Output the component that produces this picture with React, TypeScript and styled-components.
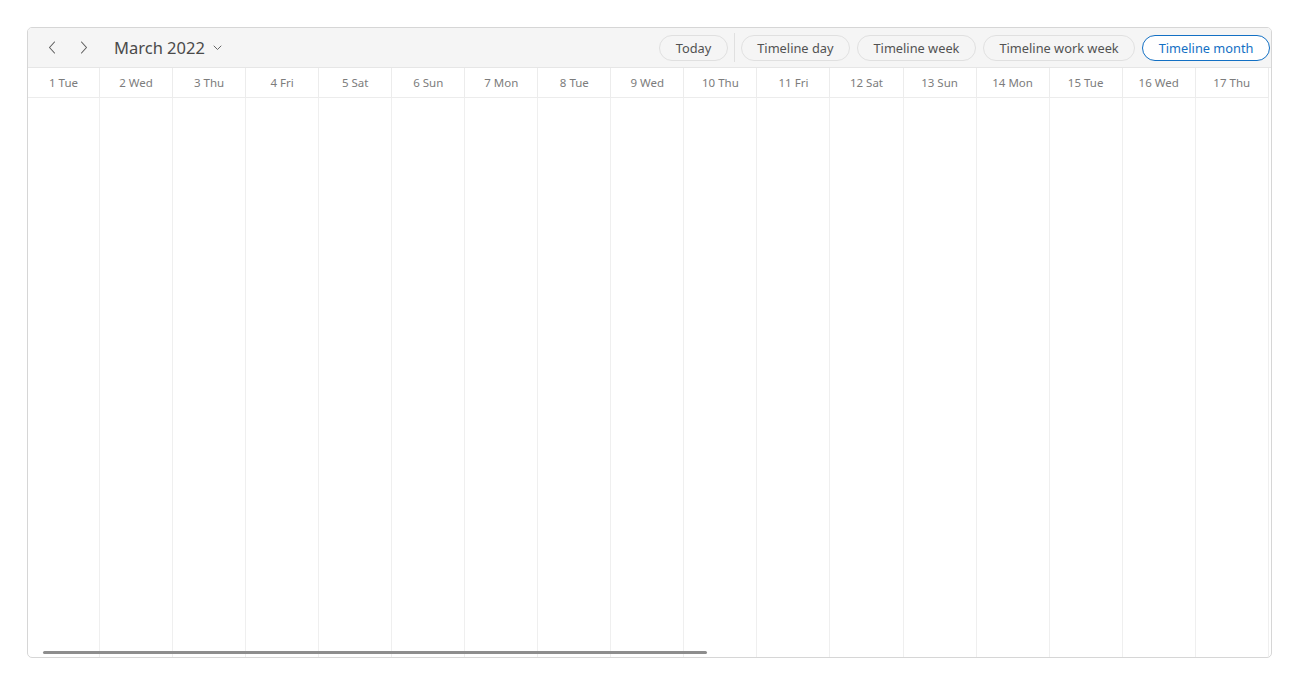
import { createGlobalStyle } from "styled-components";
import styled from "styled-components";

const dayNames = ["Sun", "Mon", "Tue", "Wed", "Thu", "Fri", "Sat"];
// March 2022 starts on a Tuesday; only the first 17 days fit in view
const days = Array.from({ length: 17 }, (_, i) => `${i + 1} ${dayNames[(i + 2) % 7]}`);

const views = ["Timeline day", "Timeline week", "Timeline work week", "Timeline month"];

const GlobalStyle = createGlobalStyle`
  body {
    margin: 0;
    background: #ffffff;
    font-family: "Noto Sans", "Open Sans", sans-serif;
  }
`;

const Page = styled.div`
  padding: 27px 28px 28px 27px;
`;

const Scheduler = styled.div`
  position: relative;
  box-sizing: border-box;
  height: 631px;
  border: 1px solid #d6d6d6;
  border-radius: 5px;
  overflow: hidden;
  display: flex;
  flex-direction: column;
  background: #fff;
`;

const Toolbar = styled.div`
  height: 39px;
  flex-shrink: 0;
  display: flex;
  align-items: center;
  padding: 0 1px 0 12px;
  background: #f5f5f5;
  border-bottom: 1px solid #e6e6e6;
`;

const NavButton = styled.button`
  width: 24px;
  height: 24px;
  margin-right: 8px;
  border: none;
  background: none;
  padding: 0;
  display: flex;
  align-items: center;
  justify-content: center;
`;

const MonthLabel = styled.div`
  display: flex;
  align-items: center;
  gap: 8px;
  margin-left: 10px;
  font-size: 16.5px;
  color: #4a4a4a;
`;

const Spacer = styled.div`
  flex: 1;
`;

const Pill = styled.button<{ active?: boolean }>`
  height: 26px;
  padding: 0 15.5px;
  margin-left: 7px;
  border-radius: 13px;
  border: 1px solid ${(p) => (p.active ? "#1370c4" : "#e0e0e0")};
  background: ${(p) => (p.active ? "#ffffff" : "#f5f5f5")};
  color: ${(p) => (p.active ? "#1370c4" : "#525252")};
  font-family: "Noto Sans", "Open Sans", sans-serif;
  font-size: 12.8px;
  line-height: 24px;
  white-space: nowrap;
`;

const Divider = styled.div`
  width: 1px;
  height: 29px;
  background: #e0e0e0;
  margin: 0 -1px 0 6px;
`;

const Grid = styled.div`
  flex: 1;
  display: grid;
  grid-template-rows: 30px 1fr;
  grid-template-columns: 72px repeat(16, 73.05px);
`;

const HeaderCell = styled.div`
  display: flex;
  align-items: center;
  justify-content: center;
  font-size: 11.5px;
  color: #7c7c7c;
  border-right: 1px solid #ececec;
  border-bottom: 1px solid #ececec;
  white-space: nowrap;
`;

const BodyCell = styled.div`
  border-right: 1px solid #efefef;
`;

const ScrollThumb = styled.div`
  position: absolute;
  left: 15px;
  bottom: 3px;
  width: 664px;
  height: 3px;
  border-radius: 2px;
  background: #8d8d8d;
`;

const Chevron = ({ dir }: { dir: "left" | "right" }) => (
  <svg width="8" height="13" viewBox="0 0 8 13" fill="none">
    <path
      d={dir === "left" ? "M6.5 1 L1.5 6.5 L6.5 12" : "M1.5 1 L6.5 6.5 L1.5 12"}
      stroke="#5c5c5c"
      strokeWidth="1.1"
      strokeLinecap="round"
      strokeLinejoin="round"
    />
  </svg>
);

const App = () => {
  return (
    <Page>
      <GlobalStyle />
      <Scheduler>
        <Toolbar>
          <NavButton>
            <Chevron dir="left" />
          </NavButton>
          <NavButton>
            <Chevron dir="right" />
          </NavButton>
          <MonthLabel>
            March 2022
            <svg width="9" height="6" viewBox="0 0 9 6" fill="none">
              <path d="M1 1 L4.5 4.5 L8 1" stroke="#666" strokeWidth="1" strokeLinecap="round" />
            </svg>
          </MonthLabel>
          <Spacer />
          <Pill>Today</Pill>
          <Divider />
          {views.map((v) => (
            <Pill key={v} active={v === "Timeline month"}>
              {v}
            </Pill>
          ))}
        </Toolbar>
        <Grid>
          {days.map((d) => (
            <HeaderCell key={d}>{d}</HeaderCell>
          ))}
          {days.map((d) => (
            <BodyCell key={d} />
          ))}
        </Grid>
        <ScrollThumb />
      </Scheduler>
    </Page>
  );
};

export default App;
